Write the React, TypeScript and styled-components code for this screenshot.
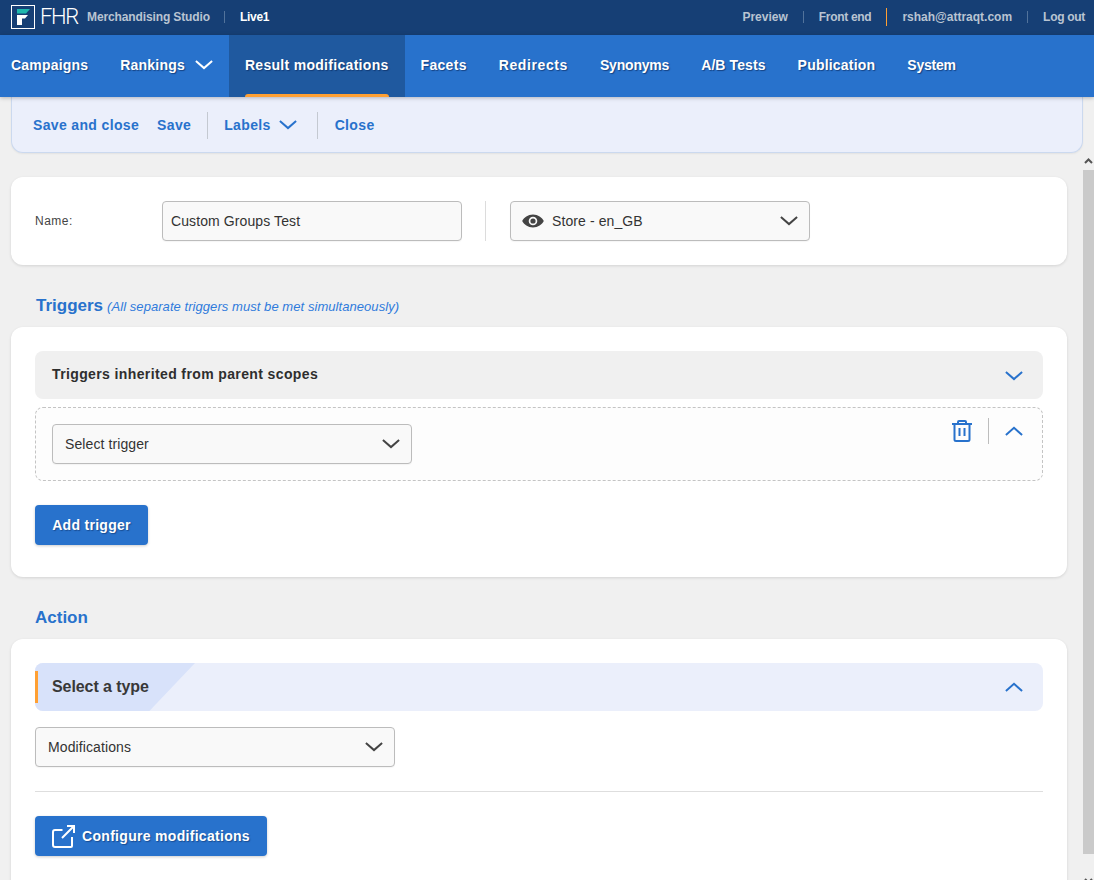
import React from "react";
import styled, { createGlobalStyle } from "styled-components";

const Global = createGlobalStyle`
  html, body { margin: 0; padding: 0; height: 880px; overflow: hidden; background: #f0f0f0; }
  * { box-sizing: border-box; }
  body { font-family: "Liberation Sans", Arial, sans-serif; color: #333; }
`;

const Page = styled.div`
  width: 1094px;
  height: 880px;
  overflow: hidden;
  display: flex;
  flex-direction: column;
`;
const TopBar = styled.header`
  height: 35px;
  flex: none;
  background: #163f75;
  display: flex;
  align-items: center;
  justify-content: space-between;
  padding: 0 9px 1px 11px;
`;
const BarGroup = styled.div`
  display: flex;
  align-items: center;
`;
const Brand = styled.span`
  font-family: "Roboto", sans-serif;
  font-weight: 300;
  font-size: 22px;
  letter-spacing: -1.3px;
  color: #fff;
  margin-left: 5px;
  width: 47px;
  line-height: 24px;
`;
const TopText = styled.span<{ $light?: boolean; $ls?: number }>`
  font-size: 12px;
  font-weight: 700;
  letter-spacing: ${(p) => p.$ls ?? 0}px;
  color: ${(p) => (p.$light ? "#ffffff" : "#b9c4d2")};
`;
const TopSep = styled.span<{ $accent?: boolean; $gap: number }>`
  width: 1px;
  height: ${(p) => (p.$accent ? 18 : 12)}px;
  margin: 0 ${(p) => p.$gap}px;
  background: ${(p) => (p.$accent ? "#ffa033" : "#52739b")};
`;
const Nav = styled.nav`
  height: 62px;
  flex: none;
  background: #2872cc;
  display: flex;
  box-shadow: 0 1px 4px rgba(0, 0, 0, 0.25);
  position: relative;
  z-index: 2;
`;
const Tab = styled.div<{ $active?: boolean; $first?: boolean; $ls?: number }>`
  position: relative;
  display: flex;
  align-items: center;
  gap: 10px;
  padding: 0 16px 2px ${(p) => (p.$first ? 11 : 16)}px;
  background: ${(p) => (p.$active ? "#1f599f" : "transparent")};
  color: #fff;
  font-size: 14px;
  font-weight: 700;
  letter-spacing: ${(p) => p.$ls ?? 0.2}px;
  text-shadow: 1px 1px 1px rgba(10, 40, 90, 0.65);
`;
const TabMark = styled.span`
  position: absolute;
  left: 16px;
  right: 16px;
  bottom: 0;
  height: 3px;
  background: #ffa033;
  border-radius: 3px 3px 0 0;
`;
const Toolbar = styled.div`
  flex: none;
  height: 56px;
  margin: 0 11px;
  padding: 1px 0 0 21px;
  background: #ebeffb;
  border: 1px solid #cbd9ef;
  border-top: 0;
  border-radius: 0 0 12px 12px;
  display: flex;
  align-items: center;
  box-shadow: 0 1px 2px rgba(0, 0, 0, 0.06);
`;
const ToolLink = styled.span<{ $gap?: number }>`
  display: flex;
  align-items: center;
  gap: 8px;
  font-size: 14px;
  font-weight: 700;
  letter-spacing: 0.35px;
  color: #2872cc;
  margin-right: ${(p) => p.$gap ?? 0}px;
`;
const ToolSep = styled.span<{ $gap: number }>`
  width: 1px;
  height: 27px;
  background: #c4c9d1;
  margin: 0 ${(p) => p.$gap}px 0 0;
`;
const Body = styled.div`
  flex: 1;
  min-height: 0;
  display: flex;
`;
const Content = styled.main`
  flex: 1;
  min-width: 0;
  padding: 24px 16px 0 11px;
`;
const Track = styled.div`
  flex: none;
  width: 11px;
  padding-top: 5px;
  display: flex;
  flex-direction: column;
  align-items: center;
`;
const TrackArrow = styled.svg<{ $down?: boolean }>`
  flex: none;
  width: 9px;
  height: 6px;
  margin: ${(p) => (p.$down ? "24px 0 0 -1px" : "0 0 0 -1px")};
`;
const Thumb = styled.div`
  flex: none;
  width: 11px;
  height: 684px;
  margin-top: 6px;
  background: #cacaca;
`;
const Card = styled.section<{ $h: number }>`
  height: ${(p) => p.$h}px;
  background: #fff;
  border-radius: 12px;
  box-shadow: 0 1px 3px rgba(0, 0, 0, 0.12);
  padding: 24px;
`;
const NameRow = styled.div`
  display: flex;
  align-items: center;
`;
const FieldLabel = styled.label`
  width: 127px;
  font-size: 12px;
  letter-spacing: 0.5px;
  color: #444;
`;
const Field = styled.div<{ $w: number }>`
  width: ${(p) => p.$w}px;
  height: 40px;
  flex: none;
  background: #f9f9f9;
  border: 1px solid #bcbcbc;
  border-radius: 4px;
  display: flex;
  align-items: center;
  padding: 0 8px;
  font-size: 14px;
  letter-spacing: 0.1px;
  color: #333;
  box-shadow: 0 1px 1px rgba(0, 0, 0, 0.04);
`;
const SelectField = styled(Field)<{ $pl?: number }>`
  justify-content: space-between;
  padding: 0 11px 0 ${(p) => p.$pl ?? 12}px;
`;
const SelectValue = styled.span`
  display: flex;
  align-items: center;
  gap: 7px;
`;
const VSep = styled.span`
  width: 1px;
  height: 40px;
  background: #dcdcdc;
  margin: 0 24px 0 23px;
`;
const SectionHead = styled.h2<{ $pl: number }>`
  margin: 31px 0 11px;
  padding-left: ${(p) => p.$pl}px;
  height: 20px;
  line-height: 20px;
  font-size: 17px;
  font-weight: 700;
  color: #2872cc;
  display: flex;
  align-items: baseline;
  gap: 4px;
`;
const SectionNote = styled.em`
  font-size: 13px;
  font-weight: 400;
  color: #2f7bdc;
  letter-spacing: 0.06px;
`;
const AccordionRow = styled.div`
  height: 48px;
  background: #f0f0f0;
  border-radius: 8px;
  display: flex;
  align-items: center;
  justify-content: space-between;
  padding: 0 20px 2px 17px;
  font-size: 14px;
  font-weight: 700;
  letter-spacing: 0.38px;
  color: #2e2e2e;
`;
const AccordionChevron = styled.span`
  display: flex;
  margin-top: 4px;
`;
const TriggerBox = styled.div`
  height: 74px;
  margin: 8px 0 24px;
  border: 1px dashed #c4c4c4;
  border-radius: 8px;
  background: #fdfdfd;
  padding: 16px 19px 0 16px;
  display: flex;
  justify-content: space-between;
  align-items: flex-start;
`;
const TriggerActions = styled.div`
  display: flex;
  align-items: center;
  margin-top: -6px;
`;
const ActionSep = styled.span`
  width: 1px;
  height: 26px;
  background: #bdbdbd;
  margin: 0 16px 0 16px;
`;
const Button = styled.button<{ $w: number }>`
  width: ${(p) => p.$w}px;
  height: 40px;
  display: flex;
  align-items: center;
  justify-content: center;
  gap: 7px;
  border: 0;
  border-radius: 4px;
  background: #2872cc;
  color: #fff;
  font-family: inherit;
  font-size: 14px;
  font-weight: 700;
  letter-spacing: 0.3px;
  padding: 0;
  text-shadow: 1px 1px 1px rgba(10, 40, 90, 0.5);
  box-shadow: 0 1px 3px rgba(0, 0, 0, 0.2);
`;
const TypeBar = styled.div`
  position: relative;
  height: 48px;
  border-radius: 8px;
  overflow: hidden;
  background: #ebeffb;
  display: flex;
  align-items: center;
  justify-content: space-between;
  padding: 0 20px 0 17px;
  font-size: 16px;
  font-weight: 700;
  letter-spacing: -0.08px;
  color: #383838;
`;
const TypeWedge = styled.span`
  position: absolute;
  left: 0;
  top: 0;
  bottom: 0;
  width: 160px;
  background: #d8e2fa;
  clip-path: polygon(0 0, 100% 0, 71.5% 100%, 0 100%);
`;
const TypeMark = styled.span`
  position: absolute;
  left: 0;
  top: 8px;
  bottom: 8px;
  width: 3px;
  background: #ffa033;
`;
const TypeLabel = styled.span`
  position: relative;
`;
const TypeChevron = styled.span`
  position: relative;
  display: flex;
`;
const Rule = styled.hr`
  border: 0;
  height: 1px;
  background: #dedede;
  margin: 24px 0;
`;
const TypeSelectSpacer = styled.div`
  margin-top: 16px;
`;

const Chevron = ({ up, color, w = 18 }: { up?: boolean; color: string; w?: number }) => (
  <svg width={w} height={w * 0.55} viewBox="0 0 20 11" fill="none" stroke={color} strokeWidth={2.2}>
    <path d={up ? "M1 10 10 2l9 8" : "M1 1l9 8 9-8"} />
  </svg>
);

const Logo = () => (
  <svg width="24" height="24" viewBox="0 0 24 24" fill="none">
    <rect x="0.5" y="0.5" width="23" height="23" stroke="#fff" />
    <path d="M6 4h13l-4 4.500H6z" fill="#1fb8ad" />
    <path d="M6 10h11l-3 3.500h-3V20H6z" fill="#fff" />
  </svg>
);

const Eye = () => (
  <svg width="24" height="24" viewBox="0 0 24 24" fill="#444">
    <path d="M12 5.500C7 5.500 2.900 8.600 1.200 12c1.700 3.400 5.800 6.500 10.800 6.500s9.100-3.100 10.800-6.500C21.100 8.600 17 5.500 12 5.500zm0 10.800a4.300 4.300 0 1 1 0-8.600 4.300 4.300 0 0 1 0 8.600zm0-6.900a2.600 2.600 0 1 0 0 5.200 2.600 2.600 0 0 0 0-5.200z" />
  </svg>
);

const Trash = () => (
  <svg width="20" height="22" viewBox="0 0 20 22" fill="none" stroke="#2872cc" strokeWidth={2}>
    <path d="M0 4h20M6 4V2a1 1 0 0 1 1-1h6a1 1 0 0 1 1 1v2M2.500 4v15.500a1.500 1.500 0 0 0 1.500 1.500h12a1.500 1.500 0 0 0 1.500-1.500V4M7.500 8v8M12.500 8v8" />
  </svg>
);

const External = () => (
  <svg width="23" height="23" viewBox="0 0 23 23" fill="none" stroke="#fff" strokeWidth={2}>
    <path d="M10.500 5H3a2 2 0 0 0-2 2v13a2 2 0 0 0 2 2h16a1 1 0 0 0 1-1V12" />
    <path d="M10 13 21.500 1.500M15 1h7v7" />
  </svg>
);

const tabs: { label: string; ls?: number }[] = [
  { label: "Facets", ls: 0.3 },
  { label: "Redirects", ls: 0.6 },
  { label: "Synonyms", ls: -0.2 },
  { label: "A/B Tests", ls: 0.1 },
  { label: "Publication" },
  { label: "System", ls: -0.2 },
];

export default function App() {
  return (
    <Page>
      <Global />
      <TopBar>
        <BarGroup>
          <Logo />
          <Brand>FHR</Brand>
          <TopText $ls={-0.12}>Merchandising Studio</TopText>
          <TopSep $gap={14.5} />
          <TopText $light $ls={-0.3}>Live1</TopText>
        </BarGroup>
        <BarGroup>
          <TopText>Preview</TopText>
          <TopSep $gap={15} />
          <TopText $ls={-0.3}>Front end</TopText>
          <TopSep $accent $gap={15} />
          <TopText>rshah@attraqt.com</TopText>
          <TopSep $gap={15} />
          <TopText $ls={-0.3}>Log out</TopText>
        </BarGroup>
      </TopBar>
      <Nav>
        <Tab $first>Campaigns</Tab>
        <Tab>
          Rankings
          <Chevron color="#fff" />
        </Tab>
        <Tab $active $ls={0.3}>
          Result modifications
          <TabMark />
        </Tab>
        {tabs.map((t) => (
          <Tab key={t.label} $ls={t.ls}>
            {t.label}
          </Tab>
        ))}
      </Nav>
      <Toolbar>
        <ToolLink $gap={18}>Save and close</ToolLink>
        <ToolLink $gap={16}>Save</ToolLink>
        <ToolSep $gap={16} />
        <ToolLink $gap={20}>
          Labels
          <Chevron color="#2872cc" />
        </ToolLink>
        <ToolSep $gap={17} />
        <ToolLink>Close</ToolLink>
      </Toolbar>
      <Body>
        <Content>
          <Card $h={88}>
            <NameRow>
              <FieldLabel>Name:</FieldLabel>
              <Field $w={300}>Custom Groups Test</Field>
              <VSep />
              <SelectField $w={300} $pl={10}>
                <SelectValue>
                  <Eye />
                  Store - en_GB
                </SelectValue>
                <Chevron color="#444" />
              </SelectField>
            </NameRow>
          </Card>
          <SectionHead $pl={25}>
            Triggers <SectionNote>(All separate triggers must be met simultaneously)</SectionNote>
          </SectionHead>
          <Card $h={250}>
            <AccordionRow>
              Triggers inherited from parent scopes
              <AccordionChevron>
                <Chevron color="#2872cc" />
              </AccordionChevron>
            </AccordionRow>
            <TriggerBox>
              <SelectField $w={360}>
                Select trigger
                <Chevron color="#444" />
              </SelectField>
              <TriggerActions>
                <Trash />
                <ActionSep />
                <Chevron up color="#2872cc" />
              </TriggerActions>
            </TriggerBox>
            <Button $w={113}>Add trigger</Button>
          </Card>
          <SectionHead $pl={24}>Action</SectionHead>
          <Card $h={260}>
            <TypeBar>
              <TypeWedge />
              <TypeMark />
              <TypeLabel>Select a type</TypeLabel>
              <TypeChevron>
                <Chevron up color="#2872cc" />
              </TypeChevron>
            </TypeBar>
            <TypeSelectSpacer>
              <SelectField $w={360}>
                Modifications
                <Chevron color="#444" />
              </SelectField>
            </TypeSelectSpacer>
            <Rule />
            <Button $w={232}>
              <External />
              Configure modifications
            </Button>
          </Card>
        </Content>
        <Track>
          <TrackArrow viewBox="0 0 9 6" fill="none" stroke="#555" strokeWidth={2}>
            <path d="M1 5l3.500-3.500L8 5" />
          </TrackArrow>
          <Thumb />
          <TrackArrow $down viewBox="0 0 9 6" fill="none" stroke="#555" strokeWidth={2}>
            <path d="M1 1l3.500 3.500L8 1" />
          </TrackArrow>
        </Track>
      </Body>
    </Page>
  );
}
